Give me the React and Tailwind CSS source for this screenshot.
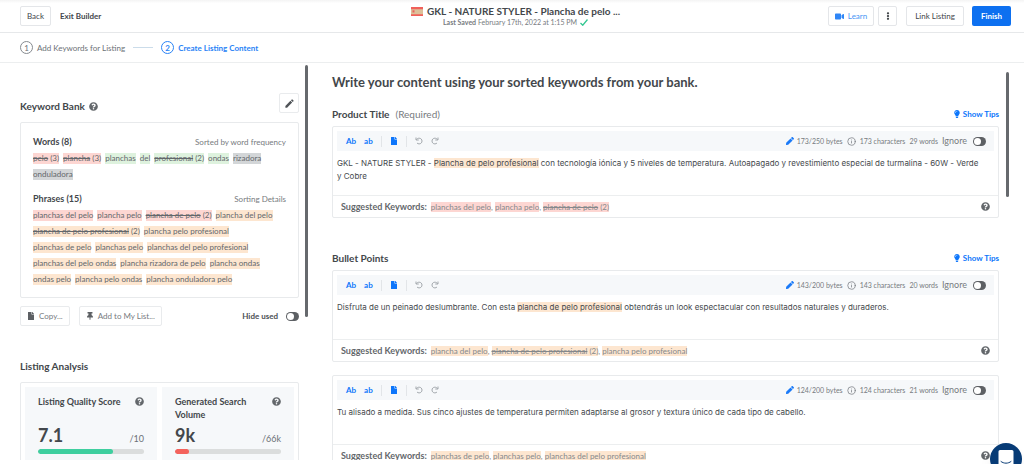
import { useState } from 'react'
import { FaFile, FaLightbulb, FaPen, FaQuestionCircle, FaThumbtack, FaVideo, FaEllipsisV } from 'react-icons/fa'
import { MdEdit } from 'react-icons/md'
import { Info } from 'lucide-react'

const TONES = {
  red: 'bg-[#fdd6d2]',
  green: 'bg-[#def2de]',
  gray: 'bg-[#d3d6d8]',
  orange: 'bg-[#fde6d0]',
}

const words = [
  { text: 'pelo', used: 3, tone: 'red' },
  { text: 'plancha', used: 3, tone: 'red' },
  { text: 'planchas', tone: 'green' },
  { text: 'del', tone: 'green' },
  { text: 'profesional', used: 2, tone: 'green' },
  { text: 'ondas', tone: 'green' },
  { text: 'rizadora', tone: 'gray' },
  { text: 'onduladora', tone: 'gray' },
]

const phrases = [
  { text: 'planchas del pelo', tone: 'red' },
  { text: 'plancha pelo', tone: 'red' },
  { text: 'plancha de pelo', used: 2, tone: 'red' },
  { text: 'plancha del pelo', tone: 'orange' },
  { text: 'plancha de pelo profesional', used: 2, tone: 'orange' },
  { text: 'plancha pelo profesional', tone: 'orange' },
  { text: 'planchas de pelo', tone: 'orange' },
  { text: 'planchas pelo', tone: 'orange' },
  { text: 'planchas del pelo profesional', tone: 'orange' },
  { text: 'planchas del pelo ondas', tone: 'orange' },
  { text: 'plancha rizadora de pelo', tone: 'orange' },
  { text: 'plancha ondas', tone: 'orange' },
  { text: 'ondas pelo', tone: 'orange' },
  { text: 'plancha pelo ondas', tone: 'orange' },
  { text: 'plancha onduladora pelo', tone: 'orange' },
]

function Keyword({ item }) {
  return (
    <span className={`text-[8px]/[11px] ${TONES[item.tone]}`}>
      {item.used ? (
        <>
          <s>{item.text}</s> ({item.used})
        </>
      ) : (
        item.text
      )}
    </span>
  )
}

function Toggle({ id }) {
  const [on, setOn] = useState(false)
  return (
    <input
      id={id}
      type="checkbox"
      role="switch"
      checked={on}
      onChange={() => setOn(!on)}
      className="relative h-[9px] w-[13px] shrink-0 appearance-none rounded-full bg-[#5d6064] before:absolute before:left-px before:top-px before:size-[7px] before:rounded-full before:bg-white checked:bg-[#0d70f0] checked:before:left-[5px]"
    />
  )
}

function Help({ label }) {
  return (
    <button type="button" aria-label={label} className="shrink-0 text-[#63676b]">
      <FaQuestionCircle className="size-[9px]" />
    </button>
  )
}

function UndoIcon({ flip }) {
  return (
    <svg viewBox="0 0 16 16" className={flip ? 'size-2 -scale-x-100' : 'size-2'} fill="none" stroke="currentColor" strokeWidth="2">
      <path d="M2 1v5h5.5" />
      <path d="M2.6 5.6C4 3.4 6 2.4 8.3 2.4c3.3 0 5.7 2.5 5.7 5.7s-2.5 5.7-5.7 5.7c-1.7 0-3.1-.6-4.2-1.700" />
    </svg>
  )
}

function Flag() {
  return (
    <svg viewBox="0 0 24 18" className="h-[9px] w-3 shrink-0" aria-label="Spain">
      <rect width="24" height="18" fill="#dcc09a" />
      <rect width="24" height="4.5" fill="#f0605a" />
      <rect y="14.5" width="24" height="3.5" fill="#f0605a" />
      <rect x="3" y="6.5" width="4" height="4.5" fill="#e9655c" />
    </svg>
  )
}

function Header() {
  return (
    <header className="grid h-[33px] grid-cols-[1fr_auto_1fr] items-center border-b border-[#e6e8ea] bg-linear-to-b from-[#f4f4f4] to-white to-10% pl-5 pr-[13px] text-[8px]">
      <div className="flex items-center gap-[9px]">
        <button type="button" className="h-5 rounded-xs border border-[#e4e6e9] px-1.5">
          Back
        </button>
        <a href="#exit" className="font-bold">
          Exit Builder
        </a>
      </div>
      <div className="text-center">
        <h1 className="flex items-center gap-1 text-[10px]/[12px] font-bold">
          <Flag />
          GKL - NATURE STYLER - Plancha de pelo ...
        </h1>
        <p className="flex items-center justify-center gap-[3px] text-[7px]/[10px] text-[#777b80]">
          <span>
            <b>Last Saved</b> February 17th, 2022 at 1:15 PM
          </span>
          <svg viewBox="0 0 16 14" className="h-[7px] w-2" fill="none" stroke="#33c791" strokeWidth="2.6">
            <path d="M1 8l4.500 4.500L15 1" />
          </svg>
        </p>
      </div>
      <div className="flex items-center justify-end">
        <button type="button" className="flex h-5 items-center gap-1 rounded-xs border border-[#e4e6e9] px-1.5 text-[#4a96f5]">
          <FaVideo className="size-[9px] text-[#2f86f6]" />
          Learn
        </button>
        <button type="button" aria-label="More" className="ml-1 flex h-5 w-[19px] items-center justify-center rounded-xs border border-[#e4e6e9]">
          <FaEllipsisV className="size-2" />
        </button>
        <button type="button" className="ml-[9px] h-5 rounded-xs border border-[#e4e6e9] px-2">
          Link Listing
        </button>
        <button type="button" className="ml-2 h-5 rounded-xs bg-[#0d70f0] px-[9px] font-bold text-white">
          Finish
        </button>
      </div>
    </header>
  )
}

function Steps() {
  return (
    <nav className="flex h-[30px] items-center border-b border-[#eceeef] pl-5 text-[8px]">
      <a href="#keywords" className="flex items-center gap-1 text-[#6c7177]">
        <span className="flex size-[13px] items-center justify-center rounded-full border border-[#868b90]">1</span>
        Add Keywords for Listing
      </a>
      <span className="mx-2 h-px w-5 bg-[#cbdcea]" />
      <a href="#content" className="flex items-center gap-1 font-bold text-[#2a83f6]">
        <span className="flex size-[13px] items-center justify-center rounded-full border border-[#2a83f6]">2</span>
        Create Listing Content
      </a>
    </nav>
  )
}

function Score({ title, value, max, percent, color }) {
  return (
    <div className="flex-1 bg-[#f6f8fa] px-[13px] pt-2">
      <div className="flex h-[26px] items-start justify-between">
        <h3 className="max-w-[88px] text-[9px]/[13px] font-bold">{title}</h3>
        <div className="flex h-[13px] items-center">
          <Help label={`About ${title}`} />
        </div>
      </div>
      <div className="mt-1 flex h-5 items-baseline justify-between">
        <span className="text-[18px]/[20px] font-bold">{value}</span>
        <span className="text-[9px] text-[#6c7177]">{max}</span>
      </div>
      <div className="mt-1 h-[5px] overflow-hidden rounded-full bg-[#dbdddd]">
        <div className={`h-full rounded-full ${color}`} style={{ width: `${percent}%` }} />
      </div>
      <div className="h-8" />
    </div>
  )
}

function KeywordBank() {
  return (
    <section>
      <div className="flex h-[21px] items-end justify-between">
        <h2 className="flex items-center gap-1 text-[10px]/[16px] font-bold">
          Keyword Bank
          <Help label="About the keyword bank" />
        </h2>
        <button type="button" aria-label="Edit keywords" className="flex size-5 items-center justify-center self-start rounded-xs border border-[#e9ebed] text-[#505458]">
          <MdEdit className="size-[11px]" />
        </button>
      </div>

      <div className="mt-2 rounded-xs border border-[#e8eaec] p-3">
        <div className="flex items-center justify-between leading-[14px]">
          <h3 className="text-[9px] font-bold">Words (8)</h3>
          <span className="text-[8px] text-[#777b80]">Sorted by word frequency</span>
        </div>
        <div className="mt-1 flex flex-wrap gap-x-1 gap-y-[5px] text-[#63676b]">
          {words.map((w) => (
            <Keyword key={w.text} item={w} />
          ))}
        </div>
        <div className="mt-3 flex items-center justify-between leading-[14px]">
          <h3 className="text-[9px] font-bold">Phrases (15)</h3>
          <a href="#sorting" className="text-[8px] text-[#777b80]">
            Sorting Details
          </a>
        </div>
        <div className="mt-1 flex flex-wrap gap-x-1 gap-y-[5px] text-[#63676b]">
          {phrases.map((p) => (
            <Keyword key={p.text} item={p} />
          ))}
        </div>
      </div>

      <div className="mt-2 flex items-center text-[8px] text-[#777b80]">
        <button type="button" className="flex h-5 items-center gap-1 rounded-xs border border-[#e9ebed] px-1.5">
          <FaFile className="size-2 text-[#5d6064]" />
          Copy...
        </button>
        <button type="button" className="ml-[9px] flex h-5 items-center gap-1 rounded-xs border border-[#e9ebed] px-1.5">
          <FaThumbtack className="size-2 text-[#5d6064]" />
          Add to My List...
        </button>
        <label htmlFor="hide-used" className="ml-auto mr-2 font-bold text-[#4b5055]">
          Hide used
        </label>
        <Toggle id="hide-used" />
      </div>
    </section>
  )
}

function Editor({ id, bytes, chars, count, suggested, children }) {
  return (
    <div className="rounded-xs border border-[#e8eaec]">
      <div className="px-1 pt-1">
        <div className="flex h-5 items-center bg-[#f6f8fa] pl-[9px] pr-2 text-[8px]">
          <div className="flex items-center gap-2 font-bold text-[#0d76fb]">
            <button type="button">Ab</button>
            <button type="button">ab</button>
            <span className="h-[11px] w-px bg-[#e2e5e8]" />
            <button type="button" aria-label="Copy text">
              <FaFile className="size-2" />
            </button>
            <span className="h-[11px] w-px bg-[#e2e5e8]" />
            <button type="button" aria-label="Undo" className="text-[#a3a8ad]">
              <UndoIcon />
            </button>
            <button type="button" aria-label="Redo" className="text-[#a3a8ad]">
              <UndoIcon flip />
            </button>
          </div>
          <div className="ml-auto flex items-center text-[7px] text-[#777b80]">
            <FaPen className="mr-[3px] size-2 text-[#1a7af8]" />
            {bytes} bytes
            <Info className="mx-1 size-[9px]" />
            {chars} characters
            <span className="mx-1">{count} words</span>
            <label htmlFor={`${id}-ignore`} className="mr-1.5 text-[9px]">
              Ignore
            </label>
            <Toggle id={`${id}-ignore`} />
          </div>
        </div>
        <div
          role="textbox"
          aria-label={id}
          contentEditable
          suppressContentEditableWarning
          className="min-h-11 pr-3 pt-1.5 font-[Inter,sans-serif] text-[8px]/[13px] text-[#45494d] outline-none"
        >
          {children}
        </div>
      </div>
      <div className="flex h-[22px] items-center border-t border-[#eceeef] px-2 text-[8px] text-[#85888b]">
        <b className="mr-1 text-[9px] text-[#63676b]">Suggested Keywords:</b>
        <p>
          {suggested.map((s, i) => (
            <span key={s.text}>
              {i > 0 && ', '}
              <Keyword item={s} />
            </span>
          ))}
        </p>
        <div className="ml-auto flex">
          <Help label="About suggested keywords" />
        </div>
      </div>
    </div>
  )
}

function FieldHeading({ title, note }) {
  return (
    <div className="mb-1 flex h-4 items-center justify-between">
      <h3 className="text-[10px] font-bold">
        {title}
        {note && <span className="ml-1.5 font-normal text-[#777b80]">{note}</span>}
      </h3>
      <button type="button" className="flex items-center gap-[2px] text-[8px] font-bold text-[#0d76fb]">
        <FaLightbulb className="size-2" />
        Show Tips
      </button>
    </div>
  )
}

export default function App() {
  return (
    <div className="flex h-screen flex-col overflow-hidden bg-white pb-1 font-[Lato,sans-serif] text-[#43474b]">
      <div className="shrink-0">
        <Header />
        <Steps />
      </div>

      <div className="flex min-h-0 flex-1 overflow-hidden">
        <aside className="flex w-[308px] shrink-0 justify-between pl-5">
          <div className="w-[279px] pt-[30px]">
            <KeywordBank />
            <section className="mt-8">
              <h2 className="text-[10px]/[16px] font-bold">Listing Analysis</h2>
              <div className="mt-2 flex gap-[5px] rounded-xs border border-[#e8eaec] p-1">
                <Score title="Listing Quality Score" value="7.1" max="/10" percent={71} color="bg-[#3fcf9f]" />
                <Score title="Generated Search Volume" value="9k" max="/66k" percent={13} color="bg-[#f4625c]" />
              </div>
            </section>
          </div>
          <div className="mt-0.5 h-[252px] w-[3px] rounded-full bg-[#66696d]" />
        </aside>

        <main className="flex flex-1 justify-between pl-6 pr-[15px]">
          <div className="mr-[7px] flex-1 pt-3">
            <h2 className="mb-4 text-[13px]/[15px] font-bold">Write your content using your sorted keywords from your bank.</h2>

            <section>
              <FieldHeading title="Product Title" note="(Required)" />
              <Editor
                id="product-title"
                bytes="173/250"
                chars={173}
                count={29}
                suggested={[
                  { text: 'planchas del pelo', tone: 'red' },
                  { text: 'plancha pelo', tone: 'red' },
                  { text: 'plancha de pelo', used: 2, tone: 'red' },
                ]}
              >
                GKL - NATURE STYLER - <mark className="bg-[#fde6d0] text-inherit">Plancha de pelo profesional</mark> con tecnología iónica y 5 niveles de
                temperatura. Autoapagado y revestimiento especial de turmalina - 60W - Verde y Cobre
              </Editor>
            </section>

            <section className="mt-8">
              <FieldHeading title="Bullet Points" />
              <div className="flex flex-col gap-[13px]">
                <Editor
                  id="bullet-1"
                  bytes="143/200"
                  chars={143}
                  count={20}
                  suggested={[
                    { text: 'plancha del pelo', tone: 'orange' },
                    { text: 'plancha de pelo profesional', used: 2, tone: 'orange' },
                    { text: 'plancha pelo profesional', tone: 'orange' },
                  ]}
                >
                  Disfruta de un peinado deslumbrante. Con esta <mark className="bg-[#fde6d0] text-inherit">plancha de pelo profesional</mark> obtendrás un
                  look espectacular con resultados naturales y duraderos.
                </Editor>
                <Editor
                  id="bullet-2"
                  bytes="124/200"
                  chars={124}
                  count={21}
                  suggested={[
                    { text: 'planchas de pelo', tone: 'orange' },
                    { text: 'planchas pelo', tone: 'orange' },
                    { text: 'planchas del pelo profesional', tone: 'orange' },
                  ]}
                >
                  Tu alisado a medida. Sus cinco ajustes de temperatura permiten adaptarse al grosor y textura único de cada tipo de cabello.
                </Editor>
              </div>
            </section>
          </div>
          <div className="mt-[9px] h-[125px] w-[3px] rounded-full bg-[#66696d]" />
        </main>
      </div>

      <button
        type="button"
        aria-label="Open chat"
        className="fixed -bottom-[11px] right-0.5 flex size-8 items-center justify-center rounded-full bg-[#073b76] shadow-lg"
      >
        <svg viewBox="0 0 16 18" className="h-[18px] w-4">
          <path d="M2 0h12a1.500 1.500 0 0 1 1.500 1.500V18l-4-2.500H2A1.500 1.500 0 0 1 .5 14V1.500A1.500 1.500 0 0 1 2 0z" fill="#fff" />
          <path d="M3 11.500c2.800 2.300 7.200 2.300 10 0" fill="none" stroke="#073b76" strokeWidth="1" strokeLinecap="round" />
        </svg>
      </button>
    </div>
  )
}
